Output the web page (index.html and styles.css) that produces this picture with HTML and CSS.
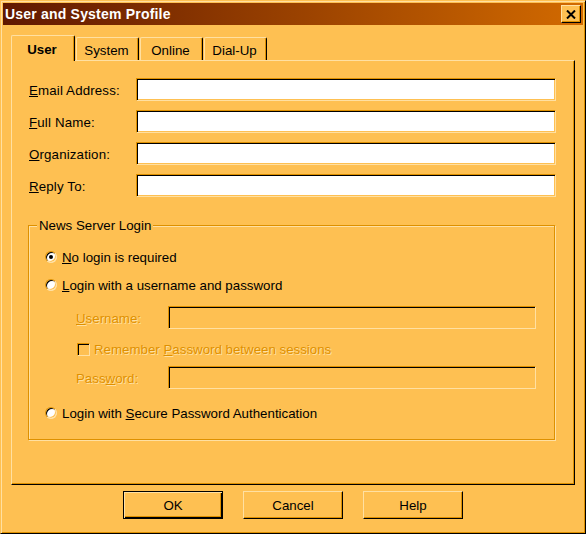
FILE: index.html
```html
<!DOCTYPE html>
<html>
<head>
<meta charset="utf-8">
<title>User and System Profile</title>
<link rel="stylesheet" href="styles.css">
</head>
<body>
<div class="window">
  <div class="titlebar">
    <span class="title">User and System Profile</span>
    <span class="close"><svg width="10" height="9" viewBox="0 0 10 9"><path d="M1 0.5 L9 8.5 M9 0.5 L1 8.5" stroke="#000" stroke-width="2" fill="none"/></svg></span>
  </div>
  <div class="tabs">
    <div class="tab active">User</div>
    <div class="tab">System</div>
    <div class="tab">Online</div>
    <div class="tab">Dial-Up</div>
  </div>
  <div class="panel">
    <div class="fields">
      <div class="row"><span class="lbl"><u>E</u>mail Address:</span><span class="input"></span></div>
      <div class="row"><span class="lbl"><u>F</u>ull Name:</span><span class="input"></span></div>
      <div class="row"><span class="lbl"><u>O</u>rganization:</span><span class="input"></span></div>
      <div class="row"><span class="lbl"><u>R</u>eply To:</span><span class="input"></span></div>
    </div>
    <div class="group">
      <div class="legend">News Server Login</div>
      <div class="opt o1"><span class="radio checked"></span><span><u>N</u>o login is required</span></div>
      <div class="opt o2"><span class="radio"></span><span><u>L</u>ogin with a username and password</span></div>
      <div class="sub u-row"><span class="sublbl dis"><u>U</u>sername:</span><span class="input disabled"></span></div>
      <div class="chk-row"><span class="check"></span><span class="dis">Remember <u>P</u>assword between sessions</span></div>
      <div class="sub p-row"><span class="sublbl dis">Pass<u>w</u>ord:</span><span class="input disabled"></span></div>
      <div class="opt o3"><span class="radio"></span><span>Login with <u>S</u>ecure Password Authentication</span></div>
    </div>
  </div>
  <div class="buttons">
    <div class="btn default">OK</div>
    <div class="btn">Cancel</div>
    <div class="btn">Help</div>
  </div>
</div>
</body>
</html>
```
FILE: styles.css
```css
:root {
  --face: #FEC052;
  --hl: #FFE0A2;
  --sh: #DE9000;
  --dk: #000000;
}
html, body {
  margin: 0;
  padding: 0;
}
body {
  background: var(--face);
  font-family: "Liberation Sans", Arial, sans-serif;
  font-size: 13.3px;
  color: #000;
}
.window {
  width: 586px;
  height: 534px;
  box-sizing: border-box;
  background: var(--face);
  border: 1px solid;
  border-color: var(--face) var(--dk) var(--dk) var(--face);
  box-shadow: inset 1px 1px 0 var(--hl), inset -1px -1px 0 var(--sh);
  padding: 2px;
  display: flex;
  flex-direction: column;
}
.titlebar {
  flex: none;
  height: 22px;
  display: flex;
  align-items: center;
  justify-content: space-between;
  padding: 0 2px;
  background: linear-gradient(to right, #601800, #D26A00);
}
.title {
  color: #fff;
  font-weight: bold;
  font-size: 14px;
  letter-spacing: 0.2px;
  line-height: 22px;
}
.close {
  width: 20px;
  height: 18px;
  box-sizing: border-box;
  background: var(--face);
  border: 1px solid;
  border-color: var(--hl) var(--dk) var(--dk) var(--hl);
  box-shadow: inset -1px -1px 0 var(--sh);
  display: flex;
  align-items: center;
  justify-content: center;
}
.close svg {
  display: block;
}
.tabs {
  flex: none;
  display: flex;
  align-items: flex-end;
  gap: 1px;
  height: 25px;
  margin: 10px 8px 0;
  position: relative;
  z-index: 1;
}
.tab {
  width: 63px;
  height: 23px;
  box-sizing: border-box;
  background: var(--face);
  border-top: 1px solid var(--hl);
  border-left: 1px solid var(--hl);
  border-right: 1px solid var(--dk);
  box-shadow: inset -1px 0 0 var(--sh);
  border-radius: 2px 2px 0 0;
  text-align: center;
  padding: 3px 2px 0 0;
  line-height: 20px;
}
.tab.active {
  width: 64px;
  height: 26px;
  margin-bottom: -1px;
  font-weight: bold;
  padding-top: 4px;
}
.panel {
  flex: none;
  height: 425px;
  box-sizing: border-box;
  margin: 0 8px;
  border: 1px solid;
  border-color: var(--hl) var(--dk) var(--dk) var(--hl);
  box-shadow: inset -1px -1px 0 var(--sh);
  padding: 17px 18px 0 17px;
}
.fields {
  display: flex;
  flex-direction: column;
  gap: 9px;
}
.row {
  display: flex;
  align-items: center;
  height: 23px;
}
.lbl {
  width: 107px;
  padding-top: 1px;
  letter-spacing: 0.15px;
}
.input {
  display: block;
  width: 420px;
  height: 23px;
  box-sizing: border-box;
  background: #fff;
  border: 1px solid;
  border-color: var(--sh) var(--hl) var(--hl) var(--sh);
  box-shadow: inset 1px 1px 0 var(--dk), inset -1px -1px 0 var(--face);
}
.input.disabled {
  width: 368px;
  background: var(--face);
}
.group {
  margin: 28px 1px 0 -1px;
  height: 215px;
  box-sizing: border-box;
  border: 1px solid var(--sh);
  box-shadow: 1px 1px 0 var(--hl), inset 1px 1px 0 var(--hl);
  padding: 0 18px 0 16px;
}
.legend {
  width: fit-content;
  height: 16px;
  line-height: 16px;
  margin: -8px 0 0 -8px;
  padding: 0 2px;
  background: var(--face);
}
.opt {
  display: flex;
  align-items: center;
  gap: 5px;
  height: 20px;
}
.o1 { margin-top: 13px; }
.o2 { margin-top: 8px; }
.o3 { margin-top: 14px; }
.sub {
  display: flex;
  align-items: center;
  height: 23px;
  padding-left: 31px;
}
.u-row { margin-top: 11px; }
.p-row { margin-top: 7px; }
.sublbl {
  width: 92px;
  padding-top: 1px;
}
.chk-row {
  display: flex;
  align-items: center;
  gap: 4px;
  height: 20px;
  margin-top: 10px;
  padding-left: 32px;
}
.dis {
  color: var(--sh);
  text-shadow: 1px 1px 0 var(--hl);
}
.radio {
  width: 12px;
  height: 12px;
  box-sizing: border-box;
  border-radius: 50%;
  border: 1px solid;
  border-color: var(--sh) var(--hl) var(--hl) var(--sh);
  box-shadow: inset 1px 1px 0 var(--dk), inset -1px -1px 0 var(--face);
  background: #fff;
  position: relative;
  flex: none;
}
.radio.checked::after {
  content: "";
  position: absolute;
  left: 3px;
  top: 3px;
  width: 4px;
  height: 4px;
  border-radius: 50%;
  background: #000;
}
.check {
  width: 13px;
  height: 13px;
  box-sizing: border-box;
  border: 1px solid;
  border-color: var(--sh) var(--hl) var(--hl) var(--sh);
  box-shadow: inset 1px 1px 0 var(--dk), inset -1px -1px 0 var(--face);
  background: var(--face);
  flex: none;
}
.buttons {
  flex: none;
  display: flex;
  justify-content: center;
  gap: 20px;
  margin-top: 6px;
}
.btn {
  width: 100px;
  height: 28px;
  box-sizing: border-box;
  background: var(--face);
  border: 1px solid;
  border-color: var(--hl) var(--dk) var(--dk) var(--hl);
  box-shadow: inset -1px -1px 0 var(--sh);
  display: flex;
  align-items: center;
  justify-content: center;
}
.btn.default {
  border-color: var(--dk);
  box-shadow: inset 1px 1px 0 var(--hl), inset -1px -1px 0 var(--dk), inset -2px -2px 0 var(--sh);
}
```
